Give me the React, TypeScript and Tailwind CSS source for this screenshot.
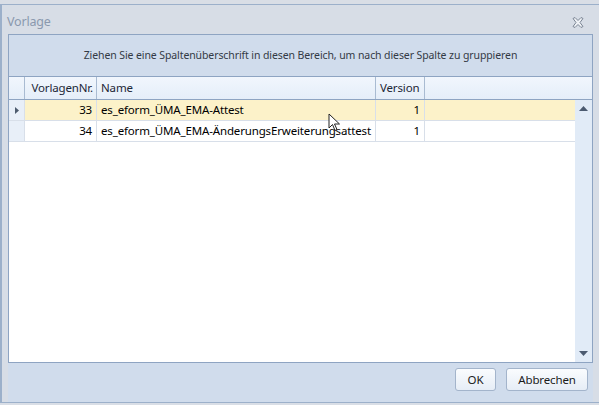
import React from 'react';

const rows = [
  { nr: 33, name: 'es_eform_ÜMA_EMA-Attest', version: 1, selected: true },
  { nr: 34, name: 'es_eform_ÜMA_EMA-ÄnderungsErweiterungsattest', version: 1, selected: false },
];

function CloseIcon() {
  return (
    <svg width="12" height="11" viewBox="0 0 12 11" className="block">
      <path
        d="M1 1.5 L3 0.5 L6 3.5 L9 0.5 L11 1.5 L8 5.5 L11 9.5 L9 10.5 L6 7.5 L3 10.5 L1 9.5 L4 5.5 Z"
        fill="#eef1f5"
        stroke="#7b8594"
        strokeWidth="1"
      />
    </svg>
  );
}

function Cursor() {
  return (
    <svg width="14" height="20" viewBox="0 0 14 20" className="absolute left-[328px] top-[113px]">
      <path d="M1 1 L1 15 L4.5 11.5 L7 17.5 L9 16.5 L6.5 11 L11.5 11 Z" fill="#ffffff" stroke="#222" strokeWidth="1" />
    </svg>
  );
}

export default function App() {
  return (
    <div
      className="relative h-[405px] w-[599px] overflow-hidden bg-[#d9dee6] pt-[4px]"
      style={{ fontFamily: '"Noto Sans", "Open Sans", sans-serif' }}
    >
      <div className="flex h-[399px] flex-col border-l-2 border-t border-b border-[#9cb0ca] bg-[#d7dde6]">
        {/* Title bar */}
        <div className="flex h-[29px] items-center justify-between pl-[5px] pr-[15px]">
          <span className="pt-[5px] text-[12.5px] tracking-[-0.2px] text-[#8a99ae]">Vorlage</span>
          <span className="pt-[5px]">
            <CloseIcon />
          </span>
        </div>

        <div className="flex flex-1 flex-col pl-[6px] pr-[6px]">
          {/* Grid panel */}
          <div className="flex h-[329px] flex-col border border-[#8ea4c2] bg-white">
            <div className="flex h-[41px] items-center justify-center bg-[#d0dcec] text-[10.5px] tracking-[-0.1px] text-[#333a45]">
              Ziehen Sie eine Spaltenüberschrift in diesen Bereich, um nach dieser Spalte zu gruppieren
            </div>

            {/* Header */}
            <div className="flex h-[24px] border-y border-[#8ea4c2] bg-gradient-to-b from-[#f1f6fd] to-[#e5eef9] text-[11.5px] tracking-[-0.15px] text-[#1b2636]">
              <div className="w-[16px] border-r border-[#a9bbd2]" />
              <div className="flex w-[72px] items-center justify-end border-r border-[#a9bbd2] pr-[3px]">VorlagenNr.</div>
              <div className="flex w-[279px] items-center border-r border-[#a9bbd2] pl-[4px]">Name</div>
              <div className="flex w-[49px] items-center border-r border-[#a9bbd2] pl-[4px]">Version</div>
              <div className="flex-1" />
            </div>

            {/* Body */}
            <div className="flex flex-1">
              <div className="flex-1">
                {rows.map((r) => (
                  <div
                    key={r.nr}
                    className={`flex h-[21px] border-b border-[#d8dfe9] text-[11.5px] tracking-[-0.15px] text-black ${
                      r.selected ? 'bg-[#fcf2c9]' : 'bg-white'
                    }`}
                  >
                    <div className="flex w-[16px] items-center justify-center border-r border-[#d8dfe9] bg-[#e8eff8]">
                      {r.selected && (
                        <svg width="4" height="7" viewBox="0 0 4 7">
                          <path d="M0 0 L4 3.5 L0 7 Z" fill="#4d5b6e" />
                        </svg>
                      )}
                    </div>
                    <div className="flex w-[72px] items-center justify-end border-r border-[#d8dfe9] pr-[4px]">{r.nr}</div>
                    <div className="flex w-[279px] items-center border-r border-[#d8dfe9] pl-[4px] whitespace-nowrap">{r.name}</div>
                    <div className="flex w-[49px] items-center justify-end border-r border-[#d8dfe9] pr-[4px]">{r.version}</div>
                    <div className="flex-1" />
                  </div>
                ))}
              </div>
              {/* Scrollbar */}
              <div className="flex w-[17px] flex-col items-center justify-between bg-[#e1ebf7] py-[6px]">
                <svg width="9" height="5" viewBox="0 0 9 5">
                  <path d="M0 5 L4.5 0 L9 5 Z" fill="#4b5a70" />
                </svg>
                <svg width="9" height="5" viewBox="0 0 9 5">
                  <path d="M0 0 L4.5 5 L9 0 Z" fill="#4b5a70" />
                </svg>
              </div>
            </div>
          </div>

          {/* Buttons */}
          <div className="flex flex-1 items-start justify-end gap-[10px] bg-[#d0dcec] pr-[5px] pt-[5px]">
            <button className="h-[23px] w-[41px] rounded-[3px] border border-[#a3b4cb] bg-gradient-to-b from-[#fafcfe] to-[#e6edf6] text-[11.5px] tracking-[-0.15px] text-[#1b1b1b]">
              OK
            </button>
            <button className="h-[23px] w-[82px] rounded-[3px] border border-[#a3b4cb] bg-gradient-to-b from-[#fafcfe] to-[#e6edf6] text-[11.5px] tracking-[-0.15px] text-[#1b1b1b]">
              Abbrechen
            </button>
          </div>
        </div>
      </div>
      <Cursor />
    </div>
  );
}
